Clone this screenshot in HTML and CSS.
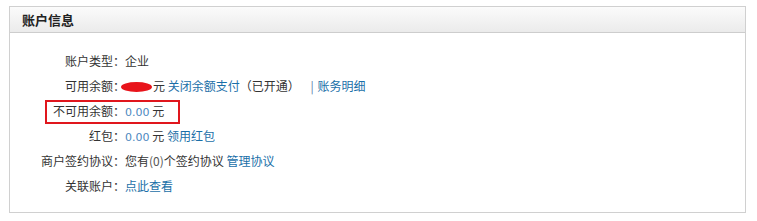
FILE: index.html
```html
<!DOCTYPE html>
<html lang="zh-CN">
<head>
    <meta charset="UTF-8">
    <title>账户信息</title>
    <link rel="stylesheet" href="styles.css">
</head>
<body>
    <div class="panel">
        <div class="panel-head">账户信息</div>
        <div class="panel-body">
            <div class="row">
                <span class="label">账户类型：</span>
                <span class="value">企业</span>
            </div>
            <div class="row">
                <span class="label">可用余额：</span>
                <span class="value"><i class="blot"></i>元 <a href="#">关闭余额支付</a>（已开通） <span class="sep">|</span> <a href="#">账务明细</a></span>
            </div>
            <div class="row marked">
                <span class="label">不可用余额：</span>
                <span class="value"><span class="money">0.00</span> 元</span>
            </div>
            <div class="row">
                <span class="label">红包：</span>
                <span class="value"><span class="money">0.00</span> 元 <a href="#">领用红包</a></span>
            </div>
            <div class="row">
                <span class="label">商户签约协议：</span>
                <span class="value">您有<span class="num">(0)</span>个签约协议 <a href="#">管理协议</a></span>
            </div>
            <div class="row">
                <span class="label">关联账户：</span>
                <span class="value"><a href="#">点此查看</a></span>
            </div>
        </div>
    </div>
</body>
</html>
```

FILE: styles.css
```css
* {
    margin: 0;
    padding: 0;
    box-sizing: border-box;
}
body {
    background: #fff;
    font-family: "Noto Sans CJK SC", "Liberation Sans", sans-serif;
    font-size: 12px;
    color: #333;
}
.panel {
    margin: 6px 11px 0 9px;
    border: 1px solid #d0d0d0;
    height: 207px;
}
.panel-head {
    height: 26px;
    line-height: 25px;
    padding-left: 12px;
    font-size: 13px;
    font-weight: bold;
    color: #222;
    background: linear-gradient(#fbfbfb, #ebebeb);
    border-bottom: 1px solid #cdcdcd;
}
.panel-body {
    padding-top: 15px;
}
.row {
    display: flex;
    height: 25px;
    line-height: 25px;
}
.label {
    width: 115px;
    text-align: right;
}
.value {
    white-space: pre;
}
a {
    color: #1a6fa8;
    text-decoration: none;
}
.money {
    font-family: "DejaVu Sans", sans-serif;
    font-size: 11px;
    color: #4d88c0;
}
.num {
    color: #555;
}
.sep {
    color: #5a7fa8;
    margin: 0 1px 0 8px;
}
.blot {
    display: inline-block;
    width: 31px;
    height: 10px;
    margin: 0 1px 0 -4px;
    vertical-align: -1px;
    background: #e8141b;
    border-radius: 50%;
}
.marked {
    position: relative;
}
.marked::after {
    content: "";
    position: absolute;
    left: 35px;
    top: 2px;
    width: 131px;
    height: 20px;
    border: 2px solid #e0161d;
}
```
